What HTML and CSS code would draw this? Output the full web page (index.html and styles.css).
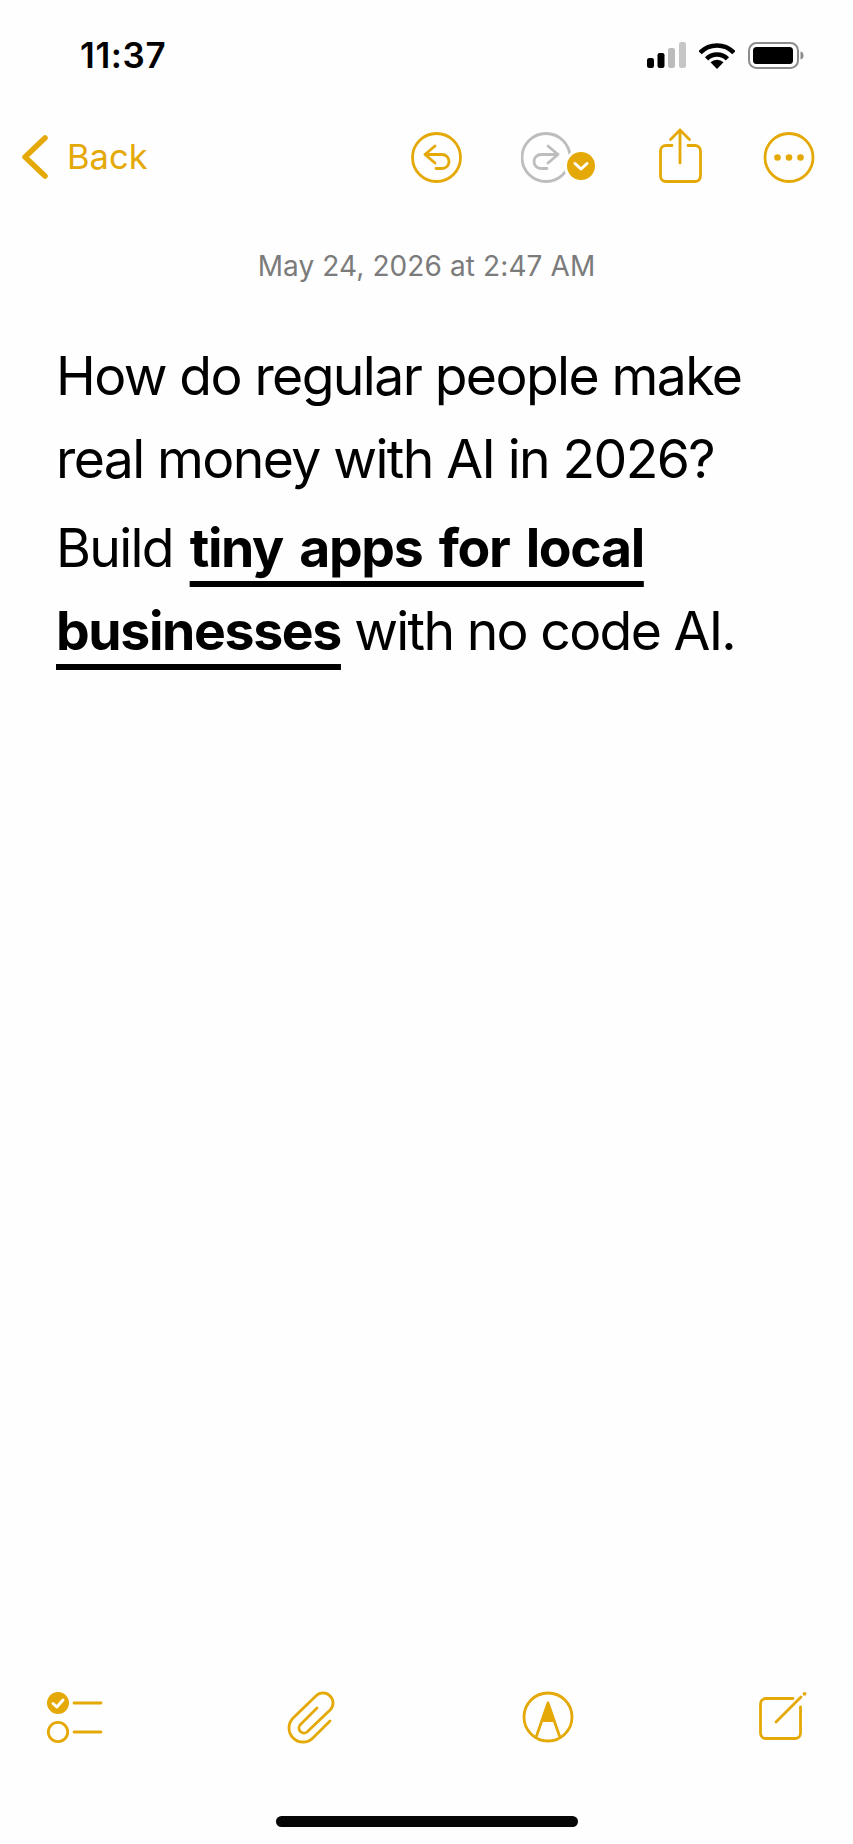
FILE: index.html
```html
<!DOCTYPE html>
<html lang="en">
<head>
<meta charset="utf-8">
<title>Notes</title>
<link rel="stylesheet" href="styles.css">
</head>
<body>
<div class="screen">
  <header class="status">
    <span class="time">11:37</span>
    <div class="status-icons">
      <svg class="signal" viewBox="0 0 39 27" width="39" height="27">
        <rect x="0" y="16" width="7" height="10" rx="2.2" fill="#000"/>
        <rect x="10.5" y="11" width="7" height="15" rx="2.2" fill="#000"/>
        <rect x="21" y="6" width="7" height="20" rx="2.2" fill="#bcbcbc"/>
        <rect x="32" y="0" width="7" height="26" rx="2.2" fill="#c6c6c6"/>
      </svg>
      <svg class="wifi" viewBox="0 0 36 27" width="36" height="27">
        <path d="M1.1 10.7A23.5 23.5 0 0 1 34.9 10.7M7.6 16.9A14.5 14.5 0 0 1 28.4 16.9" fill="none" stroke="#000" stroke-width="4.6"/>
        <path d="M18 27L11.5 20.3A9.3 9.3 0 0 1 24.5 20.3Z" fill="#000"/>
      </svg>
      <svg class="battery" viewBox="0 0 56 27" width="56" height="27">
        <rect x="1" y="1" width="49" height="25" rx="7.5" fill="none" stroke="#8c8c8c" stroke-width="2"/>
        <rect x="5" y="5" width="40" height="17" rx="3.5" fill="#000"/>
        <path d="M52.5 9.5a3.5 4 0 0 1 3 4a3.5 4 0 0 1-3 4Z" fill="#8c8c8c"/>
      </svg>
    </div>
  </header>

  <nav class="nav">
    <a class="back">
      <svg class="chevron" viewBox="0 0 30 48" width="30" height="48">
        <path d="M26 5L6 24L26 43" fill="none" stroke="currentColor" stroke-width="5.5" stroke-linecap="round" stroke-linejoin="round"/>
      </svg>
      <span>Back</span>
    </a>
    <div class="nav-actions">
      <svg class="icon" viewBox="0 0 52 62" width="52" height="62">
        <circle cx="25.5" cy="31.5" r="24"/>
        <path d="M14 28.5H31a7 7 0 0 1 0 14H25M24 20L14 28.5L24 37"/>
      </svg>
      <svg class="icon redo" viewBox="0 0 76 62" width="76" height="62">
        <circle cx="25" cy="31.5" r="24"/>
        <path d="M37 28.5H20a7 7 0 0 0 0 14H26M27 20L37 28.5L27 37"/>
        <circle class="badge-ring" cx="60" cy="40" r="17"/>
        <circle class="badge" cx="60" cy="40" r="14"/>
        <path class="badge-check" d="M54 37.5L60 43L66 37.5"/>
      </svg>
      <svg class="icon" viewBox="0 0 50 62" width="50" height="62">
        <path d="M17 19.5H11a5.5 5.5 0 0 0-5.5 5.5V50a5.500 5.500 0 0 0 5.5 5.5H40a5.500 5.500 0 0 0 5.5-5.5V25a5.500 5.500 0 0 0-5.5-5.5H33"/>
        <path d="M25 37V4M15.500 13.500L25 4L34.500 13.500"/>
      </svg>
      <svg class="icon" viewBox="0 0 52 62" width="52" height="62">
        <circle cx="26" cy="31.500" r="24"/>
        <circle class="dot" cx="14.500" cy="31.500" r="3.300"/>
        <circle class="dot" cx="26" cy="31.500" r="3.300"/>
        <circle class="dot" cx="37.500" cy="31.500" r="3.300"/>
      </svg>
    </div>
  </nav>

  <p class="date">May 24, 2026 at 2:47 AM</p>

  <main class="note">
    <p class="para">How do regular people make real money with AI in 2026?</p>
    <p class="para tight">Build <strong class="mark">tiny apps for local businesses</strong> with no code AI.</p>
  </main>

  <footer class="toolbar">
    <svg class="icon" viewBox="0 0 60 56" width="60" height="56">
      <circle class="dot" cx="14" cy="13" r="11"/>
      <path class="check" d="M9 13.500L12.800 17L19 10"/>
      <circle cx="14" cy="42" r="9.700"/>
      <path d="M30 13H57M30 42H57"/>
    </svg>
    <svg class="icon" viewBox="0 0 52 56" width="52" height="56">
      <path d="M44 31L26.900 47.900A14 14 0 0 1 7.100 28.100L29.900 5.900A10 10 0 0 1 44.100 20.100L21 42A5 5 0 0 1 14 35L31 18"/>
    </svg>
    <svg class="icon" viewBox="0 0 54 56" width="54" height="56">
      <circle cx="27" cy="27" r="24"/>
      <path class="dot" d="M27 13L34 32H20Z"/>
      <path d="M27 13L15.500 46M27 13L38.500 46"/>
    </svg>
    <svg class="icon" viewBox="0 0 52 56" width="52" height="56">
      <path d="M36 8.500H9A5.500 5.500 0 0 0 3.500 14V43A5.500 5.500 0 0 0 9 48.500H38A5.500 5.500 0 0 0 43.500 43V17"/>
      <path d="M19 32L44 7"/>
      <circle class="dot" cx="47.500" cy="3.800" r="1.900"/>
    </svg>
  </footer>

  <div class="home-bar"><span class="home-indicator"></span></div>
</div>
</body>
</html>
```
FILE: styles.css
```css
* { box-sizing: border-box; }

html, body {
  margin: 0;
  padding: 0;
  background: #fefefe;
}

.screen {
  width: 853px;
  height: 1844px;
  display: flex;
  flex-direction: column;
  font-family: Inter, "Liberation Sans", sans-serif;
  color: #000;
  background: #fefefe;
}

/* Status bar */
.status {
  display: flex;
  justify-content: space-between;
  align-items: center;
  height: 28px;
  margin-top: 41px;
  padding: 0 49px 0 80px;
}

.time {
  font-size: 35px;
  font-weight: 600;
  letter-spacing: 0.6px;
  line-height: 28px;
}

.status-icons {
  display: flex;
  align-items: center;
  gap: 13px;
}

/* Navigation row */
.nav {
  display: flex;
  justify-content: space-between;
  align-items: center;
  height: 62px;
  margin-top: 57px;
  padding: 0 38px 0 19px;
  color: #e4a907;
}

.back {
  display: flex;
  align-items: center;
  gap: 18px;
  font-size: 34.5px;
  line-height: 62px;
}

.nav-actions {
  display: flex;
  gap: 58px;
}

.icon {
  display: block;
  color: #e4a907;
  fill: none;
  stroke: currentColor;
  stroke-width: 2.8;
  stroke-linecap: round;
  stroke-linejoin: round;
}

.icon .dot {
  fill: currentColor;
  stroke: none;
}

.redo {
  stroke: #bdbdbd;
}

.redo .badge-ring {
  fill: #fefefe;
  stroke: none;
}

.redo .badge {
  fill: #e4a907;
  stroke: none;
}

.redo .badge-check,
.icon .check {
  stroke: #fff;
  stroke-width: 3;
}

/* Note body */
.date {
  margin: 58px 0 0;
  font-size: 28px;
  letter-spacing: 0.1px;
  line-height: 40px;
  text-align: center;
  color: #7b7b7b;
}

.note {
  flex: 1;
  margin-top: 48px;
  padding: 0 56px;
  font-size: 53.5px;
  letter-spacing: -1.6px;
}

.para {
  margin: 0 0 6px;
  line-height: 83px;
}

.tight {
  letter-spacing: -1.7px;
}

.mark {
  margin-left: 3.5px;
  font-weight: 700;
  letter-spacing: -1.35px;
  word-spacing: 5px;
  text-decoration: underline;
  text-decoration-thickness: 5.5px;
  text-underline-offset: 14px;
  text-decoration-skip-ink: none;
}

/* Bottom toolbar */
.toolbar {
  display: flex;
  justify-content: space-between;
  height: 56px;
  padding: 0 44px;
}

.home-bar {
  display: flex;
  justify-content: center;
  height: 98px;
  padding-top: 70px;
}

.home-indicator {
  display: block;
  width: 302px;
  height: 11px;
  border-radius: 6px;
  background: #060606;
}
```
